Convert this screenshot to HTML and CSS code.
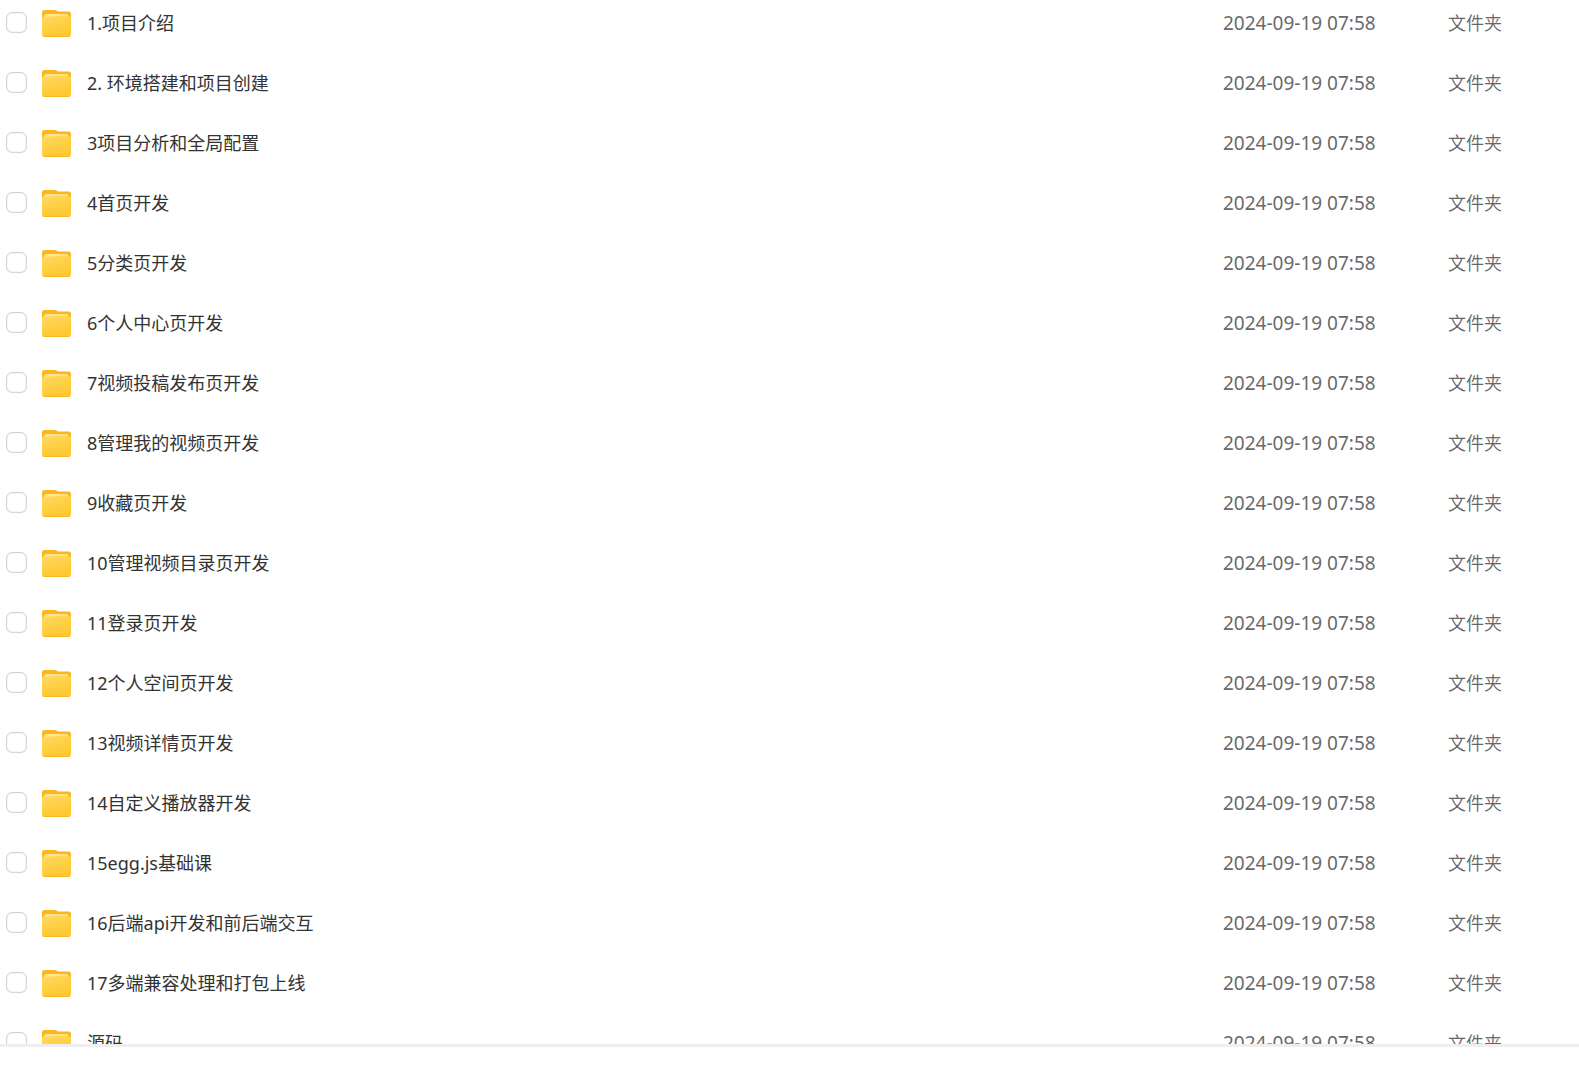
FILE: index.html
```html
<!DOCTYPE html>
<html lang="zh-CN">
<head>
  <meta charset="UTF-8">
  <title>文件列表</title>
  <meta name="viewport" content="width=device-width, initial-scale=1">
  <link rel="stylesheet" href="styles.css">
</head>
<body>
  <svg class="sprite" aria-hidden="true">
    <defs>
      <linearGradient id="front" x1="0" y1="0" x2="0.3" y2="1">
        <stop offset="0" stop-color="#ffdc62"/>
        <stop offset="1" stop-color="#ffc730"/>
      </linearGradient>
      <linearGradient id="shine" x1="0" y1="0" x2="1" y2="0">
        <stop offset="0" stop-color="#ffe6a0"/>
        <stop offset="1" stop-color="#ffdf85"/>
      </linearGradient>
      <symbol id="folder" viewBox="0 0 29 27">
        <path fill="#fdb61c" d="M0 2.5Q0 0 2.5 0H12.5Q14 0 15 .8L16 1.500H26.500Q29 1.500 29 4V15H0Z"/>
        <path fill="url(#front)" d="M0 7Q2.500 6.500 2.500 5.500Q2.500 4 4 4H25Q26.500 4 26.500 5.500Q26.500 6.500 29 7V24Q29 27 26 27H3Q0 27 0 24Z"/>
        <path fill="url(#shine)" d="M3 7V5.500Q3 4 4.500 4H24.500Q26 4 26 5.500Q14 5.500 3 7Z"/>
        <path fill="#f8b927" d="M.5 25.500Q1 26 3 26H26Q28 26 28.500 25.500Q28 27 26 27H3Q1 27 .5 25.500Z"/>
      </symbol>
    </defs>
  </svg>

  <main class="file-list">
    <table class="file-table">
      <tbody>
        <tr>
          <td><div class="file"><input type="checkbox" id="f1"><svg class="icon"><use href="#folder"/></svg><label for="f1">1.项目介绍</label></div></td>
          <td class="date">2024-09-19 07:58</td>
          <td class="type">文件夹</td>
        </tr>
        <tr>
          <td><div class="file"><input type="checkbox" id="f2"><svg class="icon"><use href="#folder"/></svg><label for="f2">2. 环境搭建和项目创建</label></div></td>
          <td class="date">2024-09-19 07:58</td>
          <td class="type">文件夹</td>
        </tr>
        <tr>
          <td><div class="file"><input type="checkbox" id="f3"><svg class="icon"><use href="#folder"/></svg><label for="f3">3项目分析和全局配置</label></div></td>
          <td class="date">2024-09-19 07:58</td>
          <td class="type">文件夹</td>
        </tr>
        <tr>
          <td><div class="file"><input type="checkbox" id="f4"><svg class="icon"><use href="#folder"/></svg><label for="f4">4首页开发</label></div></td>
          <td class="date">2024-09-19 07:58</td>
          <td class="type">文件夹</td>
        </tr>
        <tr>
          <td><div class="file"><input type="checkbox" id="f5"><svg class="icon"><use href="#folder"/></svg><label for="f5">5分类页开发</label></div></td>
          <td class="date">2024-09-19 07:58</td>
          <td class="type">文件夹</td>
        </tr>
        <tr>
          <td><div class="file"><input type="checkbox" id="f6"><svg class="icon"><use href="#folder"/></svg><label for="f6">6个人中心页开发</label></div></td>
          <td class="date">2024-09-19 07:58</td>
          <td class="type">文件夹</td>
        </tr>
        <tr>
          <td><div class="file"><input type="checkbox" id="f7"><svg class="icon"><use href="#folder"/></svg><label for="f7">7视频投稿发布页开发</label></div></td>
          <td class="date">2024-09-19 07:58</td>
          <td class="type">文件夹</td>
        </tr>
        <tr>
          <td><div class="file"><input type="checkbox" id="f8"><svg class="icon"><use href="#folder"/></svg><label for="f8">8管理我的视频页开发</label></div></td>
          <td class="date">2024-09-19 07:58</td>
          <td class="type">文件夹</td>
        </tr>
        <tr>
          <td><div class="file"><input type="checkbox" id="f9"><svg class="icon"><use href="#folder"/></svg><label for="f9">9收藏页开发</label></div></td>
          <td class="date">2024-09-19 07:58</td>
          <td class="type">文件夹</td>
        </tr>
        <tr>
          <td><div class="file"><input type="checkbox" id="f10"><svg class="icon"><use href="#folder"/></svg><label for="f10">10管理视频目录页开发</label></div></td>
          <td class="date">2024-09-19 07:58</td>
          <td class="type">文件夹</td>
        </tr>
        <tr>
          <td><div class="file"><input type="checkbox" id="f11"><svg class="icon"><use href="#folder"/></svg><label for="f11">11登录页开发</label></div></td>
          <td class="date">2024-09-19 07:58</td>
          <td class="type">文件夹</td>
        </tr>
        <tr>
          <td><div class="file"><input type="checkbox" id="f12"><svg class="icon"><use href="#folder"/></svg><label for="f12">12个人空间页开发</label></div></td>
          <td class="date">2024-09-19 07:58</td>
          <td class="type">文件夹</td>
        </tr>
        <tr>
          <td><div class="file"><input type="checkbox" id="f13"><svg class="icon"><use href="#folder"/></svg><label for="f13">13视频详情页开发</label></div></td>
          <td class="date">2024-09-19 07:58</td>
          <td class="type">文件夹</td>
        </tr>
        <tr>
          <td><div class="file"><input type="checkbox" id="f14"><svg class="icon"><use href="#folder"/></svg><label for="f14">14自定义播放器开发</label></div></td>
          <td class="date">2024-09-19 07:58</td>
          <td class="type">文件夹</td>
        </tr>
        <tr>
          <td><div class="file"><input type="checkbox" id="f15"><svg class="icon"><use href="#folder"/></svg><label for="f15">15egg.js基础课</label></div></td>
          <td class="date">2024-09-19 07:58</td>
          <td class="type">文件夹</td>
        </tr>
        <tr>
          <td><div class="file"><input type="checkbox" id="f16"><svg class="icon"><use href="#folder"/></svg><label for="f16">16后端api开发和前后端交互</label></div></td>
          <td class="date">2024-09-19 07:58</td>
          <td class="type">文件夹</td>
        </tr>
        <tr>
          <td><div class="file"><input type="checkbox" id="f17"><svg class="icon"><use href="#folder"/></svg><label for="f17">17多端兼容处理和打包上线</label></div></td>
          <td class="date">2024-09-19 07:58</td>
          <td class="type">文件夹</td>
        </tr>
        <tr>
          <td><div class="file"><input type="checkbox" id="f18"><svg class="icon"><use href="#folder"/></svg><label for="f18">源码</label></div></td>
          <td class="date">2024-09-19 07:58</td>
          <td class="type">文件夹</td>
        </tr>
      </tbody>
    </table>
  </main>
  <footer class="bottom-bar"></footer>
</body>
</html>
```
FILE: styles.css
```css
* {
  box-sizing: border-box;
}

body {
  margin: 0;
  height: 100vh;
  display: flex;
  flex-direction: column;
  background: #fff;
  font-family: "Noto Sans", "Noto Sans CJK SC", sans-serif;
  font-size: 18px;
  line-height: 24px;
  color: #333;
}

/* display: none would switch the gradients off */
.sprite {
  width: 0;
  height: 0;
}

.file-list {
  flex: 1;
  min-height: 0;
  overflow: hidden;
}

.file-table {
  width: 100%;
  border-collapse: collapse;
}

.file-table td {
  height: 60px;
  padding: 0 0 14px;
  vertical-align: middle;
  white-space: nowrap;
}

.file {
  display: flex;
  align-items: center;
  padding-left: 6px;
}

.file input {
  appearance: none;
  width: 21px;
  height: 21px;
  margin: 0 15px 2px 0;
  border: 1px solid #d5d5d5;
  border-radius: 6px;
  background: #fff;
  box-shadow: inset 0 0 1px #bbb;
}

.file input:checked {
  background: #06a7ff;
  border-color: #06a7ff;
}

.icon {
  width: 29px;
  height: 27px;
  margin-right: 16px;
}

.file-table .date {
  width: 225px;
  font-size: 19px;
  color: #6a6a6a;
}

.file-table .type {
  width: 131px;
  font-weight: 350;
  color: #666;
}

.bottom-bar {
  height: 39px;
  border-top: 3px solid #efefef;
}
```
